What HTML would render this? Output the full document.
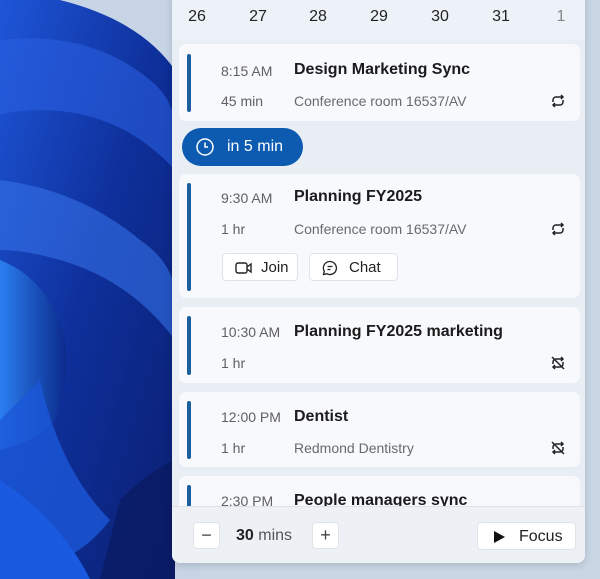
<!DOCTYPE html>
<html><head><meta charset="utf-8"><style>
*{margin:0;padding:0;box-sizing:border-box}
body{width:600px;height:579px;overflow:hidden;position:relative;font-family:"Liberation Sans",sans-serif;background:#c9d6e4}
#wp{position:absolute;left:0;top:0}
.panel{position:absolute;left:172px;top:-10px;width:413px;height:573px;background:#e9eef5;border-radius:8px;box-shadow:0 2px 8px rgba(0,0,0,.15);overflow:hidden}
.dates{position:absolute;top:0;left:0;width:100%;height:50px;background:#edf2f8}
.dates span{position:absolute;top:18px;font-size:16px;color:#222;transform:translateX(-50%)}
.card{position:absolute;left:7px;width:401px;background:#f7f9fc;border-radius:7px}
.bar{position:absolute;left:8px;width:4px;background:#1d5f9c;border-radius:2px}
.t{position:absolute;left:42px;font-size:14px;color:#606060}
.ti{position:absolute;left:115px;font-size:16px;font-weight:bold;color:#1b1b1b}
.loc{position:absolute;left:115px;font-size:14px;color:#6a6a6a}
.ic{position:absolute;right:14px}
.pill{position:absolute;left:10px;top:138px;width:121px;height:38px;border-radius:19px;background:#0c5bb0;color:#fff;font-size:16px}
.btn{position:absolute;background:#fff;border:1px solid #e0e3e8;border-radius:4px;font-size:15px;color:#222}
.footer{position:absolute;left:0;top:516px;width:100%;height:57px;background:#edf1f6;border-top:1px solid #dde2e8}
</style></head><body>
<svg id="wp" width="200" height="579" viewBox="0 0 200 579">
<defs>
<linearGradient id="g1" x1="0" y1="0" x2="1" y2="1"><stop offset="0" stop-color="#1e56d8"/><stop offset=".5" stop-color="#0e2f9a"/><stop offset="1" stop-color="#0a1f70"/></linearGradient>
<linearGradient id="g2" x1="0" y1="0" x2="1" y2="0"><stop offset="0" stop-color="#2a7ef0"/><stop offset="1" stop-color="#0b2a8a"/></linearGradient>
</defs>
<rect width="200" height="579" fill="#c6d4e6"/>
<path d="M0 0 L60 0 Q140 20 175 70 L175 579 L80 579 Q40 560 0 560 Z" fill="url(#g1)"/>
<path d="M0 40 Q90 30 150 80 Q175 100 175 130 L175 170 Q120 110 40 110 Q15 110 0 115 Z" fill="#2a5fe0" opacity=".6"/>
<path d="M0 180 Q80 190 140 240 Q170 260 175 290 L175 340 Q130 280 60 260 Q25 250 0 250 Z" fill="#3572e8" opacity=".6"/>
<path d="M0 260 Q50 280 65 340 Q70 380 55 420 Q40 440 0 450 Z" fill="url(#g2)"/>
<path d="M40 380 Q60 470 110 520 Q80 560 30 570 Q0 560 0 540 L0 420 Z" fill="#1c58d8" opacity=".8"/>
<path d="M120 500 Q150 470 175 460 L175 579 L100 579 Z" fill="#0a1a60" opacity=".7"/>
<path d="M0 480 Q60 520 90 579 L0 579 Z" fill="#1a5ae0"/>
</svg>
<div class="panel">
<div class="dates">
<span style="left:25px">26</span><span style="left:86px">27</span><span style="left:146px">28</span><span style="left:207px">29</span><span style="left:268px">30</span><span style="left:329px">31</span><span style="left:389px;color:#888">1</span>
</div>
<div class="card" style="top:54px;height:77px"><div class="bar" style="top:10px;height:58px"></div>
<div class="t" style="top:19px">8:15 AM</div><div class="ti" style="top:17px">Design Marketing Sync</div>
<div class="t" style="top:49px">45 min</div><div class="loc" style="top:49px">Conference room 16537/AV</div>
<svg class="ic" style="top:49px" width="16" height="16" viewBox="0 0 16 16" fill="none" stroke="#222" stroke-width="1.5"><path d="M3 9V7a3 3 0 0 1 3-3h7M11 2l2 2-2 2M13 7v2a3 3 0 0 1-3 3H3M5 14l-2-2 2-2"/></svg>
</div>
<div class="pill"><svg style="position:absolute;left:14px;top:10px" width="18" height="18" viewBox="0 0 18 18" fill="none" stroke="#fff" stroke-width="1.5"><circle cx="9" cy="9" r="8"/><path d="M9 4.5V9h3"/></svg><span style="position:absolute;left:45px;top:10px">in 5 min</span></div>
<div class="card" style="top:184px;height:124px"><div class="bar" style="top:9px;height:108px"></div>
<div class="t" style="top:16px">9:30 AM</div><div class="ti" style="top:14px">Planning FY2025</div>
<div class="t" style="top:47px">1 hr</div><div class="loc" style="top:47px">Conference room 16537/AV</div>
<svg class="ic" style="top:47px" width="16" height="16" viewBox="0 0 16 16" fill="none" stroke="#222" stroke-width="1.5"><path d="M3 9V7a3 3 0 0 1 3-3h7M11 2l2 2-2 2M13 7v2a3 3 0 0 1-3 3H3M5 14l-2-2 2-2"/></svg>
<div class="btn" style="left:43px;top:79px;width:76px;height:28px"><svg style="position:absolute;left:12px;top:8px" width="18" height="12" viewBox="0 0 18 12" fill="none" stroke="#222" stroke-width="1.4"><rect x="1" y="1" width="11" height="10" rx="2"/><path d="M12 5l4-3v8l-4-3"/></svg><span style="position:absolute;left:38px;top:5px">Join</span></div>
<div class="btn" style="left:130px;top:79px;width:89px;height:28px"><svg style="position:absolute;left:12px;top:6px" width="16" height="16" viewBox="0 0 16 16" fill="none" stroke="#222" stroke-width="1.3"><path d="M8 1.5a6.5 6.5 0 1 1-3.2 12.2L1.5 14.5l.8-3.2A6.5 6.5 0 0 1 8 1.5z"/><path d="M5.5 6.5h5M5.5 9.5h3"/></svg><span style="position:absolute;left:39px;top:5px">Chat</span></div>
</div>
<div class="card" style="top:317px;height:76px"><div class="bar" style="top:9px;height:59px"></div>
<div class="t" style="top:17px">10:30 AM</div><div class="ti" style="top:16px">Planning FY2025 marketing</div>
<div class="t" style="top:48px">1 hr</div>
<svg class="ic" style="top:48px" width="16" height="16" viewBox="0 0 16 16" fill="none" stroke="#222" stroke-width="1.5"><path d="M3 9V7a3 3 0 0 1 3-3h7M11 2l2 2-2 2M13 7v2a3 3 0 0 1-3 3H3M5 14l-2-2 2-2M2 2l12 12"/></svg>
</div>
<div class="card" style="top:402px;height:75px"><div class="bar" style="top:9px;height:58px"></div>
<div class="t" style="top:17px">12:00 PM</div><div class="ti" style="top:16px">Dentist</div>
<div class="t" style="top:48px">1 hr</div><div class="loc" style="top:48px">Redmond Dentistry</div>
<svg class="ic" style="top:48px" width="16" height="16" viewBox="0 0 16 16" fill="none" stroke="#222" stroke-width="1.5"><path d="M3 9V7a3 3 0 0 1 3-3h7M11 2l2 2-2 2M13 7v2a3 3 0 0 1-3 3H3M5 14l-2-2 2-2M2 2l12 12"/></svg>
</div>
<div class="card" style="top:486px;height:60px"><div class="bar" style="top:9px;height:40px"></div>
<div class="t" style="top:17px">2:30 PM</div><div class="ti" style="top:16px">People managers sync</div>
</div>
<div class="footer">
<div class="btn" style="left:21px;top:15px;width:27px;height:27px;font-size:18px;text-align:center;line-height:24px;color:#444">−</div>
<div style="position:absolute;left:64px;top:20px;font-size:16px;color:#222"><b>30</b> <span style="color:#555">mins</span></div>
<div class="btn" style="left:140px;top:15px;width:27px;height:27px;font-size:18px;text-align:center;line-height:24px;color:#444">+</div>
<div class="btn" style="left:305px;top:15px;width:99px;height:28px"><svg style="position:absolute;left:16px;top:8px" width="11" height="12" viewBox="0 0 11 12"><path d="M0 0L11 6L0 12Z" fill="#111"/></svg><span style="position:absolute;left:41px;top:5px;font-size:16px">Focus</span></div>
</div>
</div>
</body></html>
